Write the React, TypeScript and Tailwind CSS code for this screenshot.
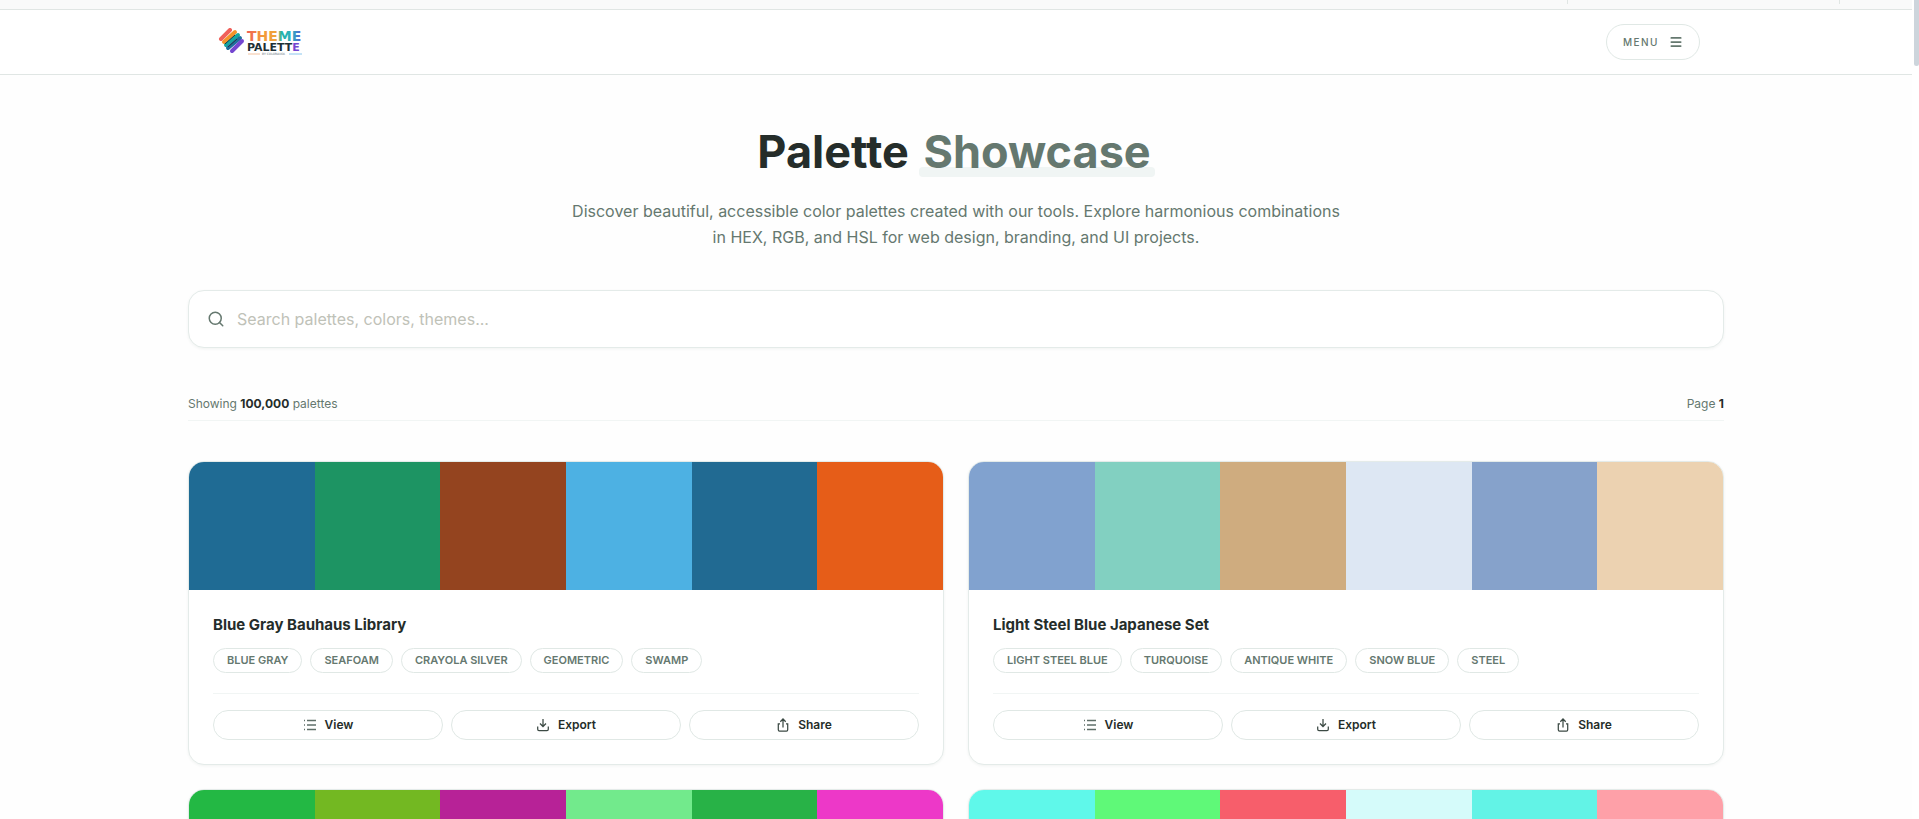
import { Menu, Search } from "lucide-react";

interface Palette {
  colors: string[];
  name?: string;
  tags?: string[];
}

const palettes: Palette[] = [
  {
    name: "Blue Gray Bauhaus Library",
    colors: ["#1f6b94", "#1d9463", "#94441f", "#4db1e3", "#216a92", "#e65d18"],
    tags: ["Blue Gray", "Seafoam", "Crayola Silver", "Geometric", "Swamp"],
  },
  {
    name: "Light Steel Blue Japanese Set",
    colors: ["#81a2cf", "#82d0c1", "#cfac7f", "#dde7f3", "#86a2cb", "#ecd2b1"],
    tags: ["Light Steel Blue", "Turquoise", "Antique White", "Snow Blue", "Steel"],
  },
  { colors: ["#23b844", "#73b822", "#b72297", "#72ea8c", "#28b247", "#ed38c8"] },
  { colors: ["#5ff8ea", "#5ff978", "#f75e6b", "#d5fbfa", "#62f3e6", "#fea0a8"] },
];

function ListIcon() {
  return (
    <svg className="w-[14px] h-[14px]" viewBox="0 0 14 14" fill="none" stroke="#5f6f69" strokeWidth="1.5">
      <path d="M4 2.5h9M4 7h9M4 11.5h9M1 2.5h1M1 7h1M1 11.5h1" />
    </svg>
  );
}

function ExportIcon() {
  return (
    <svg className="w-[14px] h-[14px]" viewBox="0 0 14 14" fill="none" stroke="#3c4a44" strokeWidth="1.25">
      <path d="M7 1v7M4 5.5l3 3 3-3M1.7 8.5v2.8c0 .8.5 1.3 1.3 1.3h8c.8 0 1.3-.5 1.3-1.3V8.5" />
    </svg>
  );
}

function ShareIcon() {
  return (
    <svg className="w-[14px] h-[14px]" viewBox="0 0 14 14" fill="none" stroke="#3c4a44" strokeWidth="1.25">
      <path d="M7 9.5V1M4.3 3.7L7 1l2.7 2.7M4 5.8H2.3v6c0 .8.4 1.3 1.2 1.3h7c.8 0 1.2-.5 1.2-1.3v-6H10" />
    </svg>
  );
}

const actions = [
  { label: "View", Icon: ListIcon },
  { label: "Export", Icon: ExportIcon },
  { label: "Share", Icon: ShareIcon },
];

function Logo() {
  return (
    <svg className="w-[86px] h-[28px]" viewBox="0 0 86 28" role="img" aria-label="Theme Palette">
      <defs>
        <linearGradient id="theme" gradientUnits="userSpaceOnUse" x1="29" y1="0" x2="84" y2="0">
          <stop offset="0" stopColor="#ee5f55" />
          <stop offset="0.25" stopColor="#f3963c" />
          <stop offset="0.55" stopColor="#eea53a" />
          <stop offset="0.63" stopColor="#22b3a9" />
          <stop offset="0.82" stopColor="#2cafc0" />
          <stop offset="1" stopColor="#5b58d6" />
        </linearGradient>
      </defs>
      <g strokeWidth="4" strokeLinecap="round">
        <path d="M3 11L12 2" stroke="#f0605a" />
        <path d="M6 14L17 4" stroke="#f5932a" />
        <path d="M8 17L20 7" stroke="#16a7a0" />
        <path d="M10 20L22 10" stroke="#1f6f9c" />
        <path d="M14 23L24 13" stroke="#7446d0" />
      </g>
      <path d="M7 16L17 7M10 19L19 11" stroke="#1f3540" strokeWidth="1" />
      <g fontFamily="DejaVu Sans, sans-serif">
        <text x="29" y="13" fontSize="14" className="font-bold" fill="url(#theme)">
          THEME
        </text>
        <text x="29" y="23" fontSize="11" className="font-bold" fill="#1f3036">
          PALETT<tspan fill="#7446d0">E</tspan>
        </text>
        <text x="44" y="27" fontSize="3" fill="#60737a">
          BY COLORAVOX
        </text>
      </g>
      <path d="M30 26h12" stroke="#f0b489" strokeWidth="0.8" />
      <path d="M71 26h13" stroke="#6db8e8" strokeWidth="0.8" />
    </svg>
  );
}

function PaletteCard({ name, colors, tags = [] }: Palette) {
  return (
    <article className="rounded-2xl border border-[#e4ebe9] bg-white overflow-hidden shadow-[0_1px_3px_rgba(40,60,50,0.06)]">
      <div className="flex h-32">
        {colors.map((color) => (
          <div key={color} className="flex-1" style={{ backgroundColor: color }} />
        ))}
      </div>
      {name && (
        <div className="p-6">
          <h2 className="text-[15px] leading-[22px] font-bold text-[#252d2a]">{name}</h2>
          <ul className="mt-3 flex flex-wrap gap-2">
            {tags.map((tag) => (
              <li
                key={tag}
                className="rounded-full border border-[#e0e8e5] px-[13px] py-1 text-[11px] leading-[15px] font-semibold uppercase text-[#65786f]"
              >
                {tag}
              </li>
            ))}
          </ul>
          <div className="mt-5 grid grid-cols-3 gap-2 border-t border-[#f1f5f4] pt-4">
            {actions.map(({ label, Icon }) => (
              <button
                key={label}
                className="flex h-[30px] items-center justify-center gap-2 rounded-full border border-[#e0e8e5] text-xs font-semibold text-[#252d2a] cursor-pointer"
              >
                <Icon />
                {label}
              </button>
            ))}
          </div>
        </div>
      )}
    </article>
  );
}

export default function App() {
  return (
    <div className="flex h-screen overflow-hidden bg-[#fefefe] font-[Inter,sans-serif] text-[#65786f]">
      <div className="min-w-0 flex-1">
        <div className="flex h-[10px] justify-end border-b border-[#e0e6e4] bg-[#f9fafa]">
          <div className="mr-[72px] h-1 w-[273px] border-x border-[#e0e6e4]" />
        </div>
        <header className="h-[65px] border-b border-[#e0e6e4] bg-white">
          <div className="mx-auto flex h-full max-w-[1536px] items-center justify-between pl-[30px] pr-6">
            <a href="#">
              <Logo />
            </a>
            <button className="flex h-9 items-center gap-[10px] rounded-full border border-[#e0e8e5] px-4 text-[10px] font-medium tracking-[0.15em] cursor-pointer">
              MENU
              <Menu className="w-[14px] h-[14px]" strokeWidth={3} />
            </button>
          </div>
        </header>
        <main className="mx-auto max-w-[1536px]">
          <section className="pt-12 text-center">
            <h1 className="text-[45px] leading-[58px] font-bold text-[#252d2a]">
              Palette{" "}
              <span className="relative inline-block px-1 text-[#65786f]">
                <span className="absolute inset-x-0 bottom-1 h-[10px] rounded bg-[#f0f5f4]" />
                <span className="relative">Showcase</span>
              </span>
            </h1>
            <p className="mx-auto mt-[17px] max-w-[800px] text-base leading-[26px]">
              Discover beautiful, accessible color palettes created with our tools. Explore harmonious combinations
              <br />
              in HEX, RGB, and HSL for web design, branding, and UI projects.
            </p>
          </section>
          <label className="mt-10 flex h-[58px] items-center gap-3 rounded-2xl border border-[#e4ebe9] bg-white px-[18px] shadow-[0_1px_3px_rgba(40,60,50,0.06)]">
            <Search className="w-[18px] h-[18px]" />
            <input
              type="text"
              aria-label="Search palettes"
              placeholder="Search palettes, colors, themes..."
              className="flex-1 bg-transparent text-base outline-none placeholder:text-[#bfc2b8]"
            />
          </label>
          <div className="mt-[47px] flex justify-between border-b border-[#f1f5f4] pb-[7px] text-xs leading-[18px]">
            <p>
              Showing <strong className="text-[#252d2a]">100,000</strong> palettes
            </p>
            <p>
              Page <strong className="text-[#252d2a]">1</strong>
            </p>
          </div>
          <section className="mt-10 grid grid-cols-2 gap-6">
            {palettes.map((palette) => (
              <PaletteCard key={palette.colors[0]} {...palette} />
            ))}
          </section>
        </main>
      </div>
      <div className="w-[7px] bg-white">
        <div className="ml-[2px] h-[66px] rounded-b bg-[#cdd5dc]" />
      </div>
    </div>
  );
}
